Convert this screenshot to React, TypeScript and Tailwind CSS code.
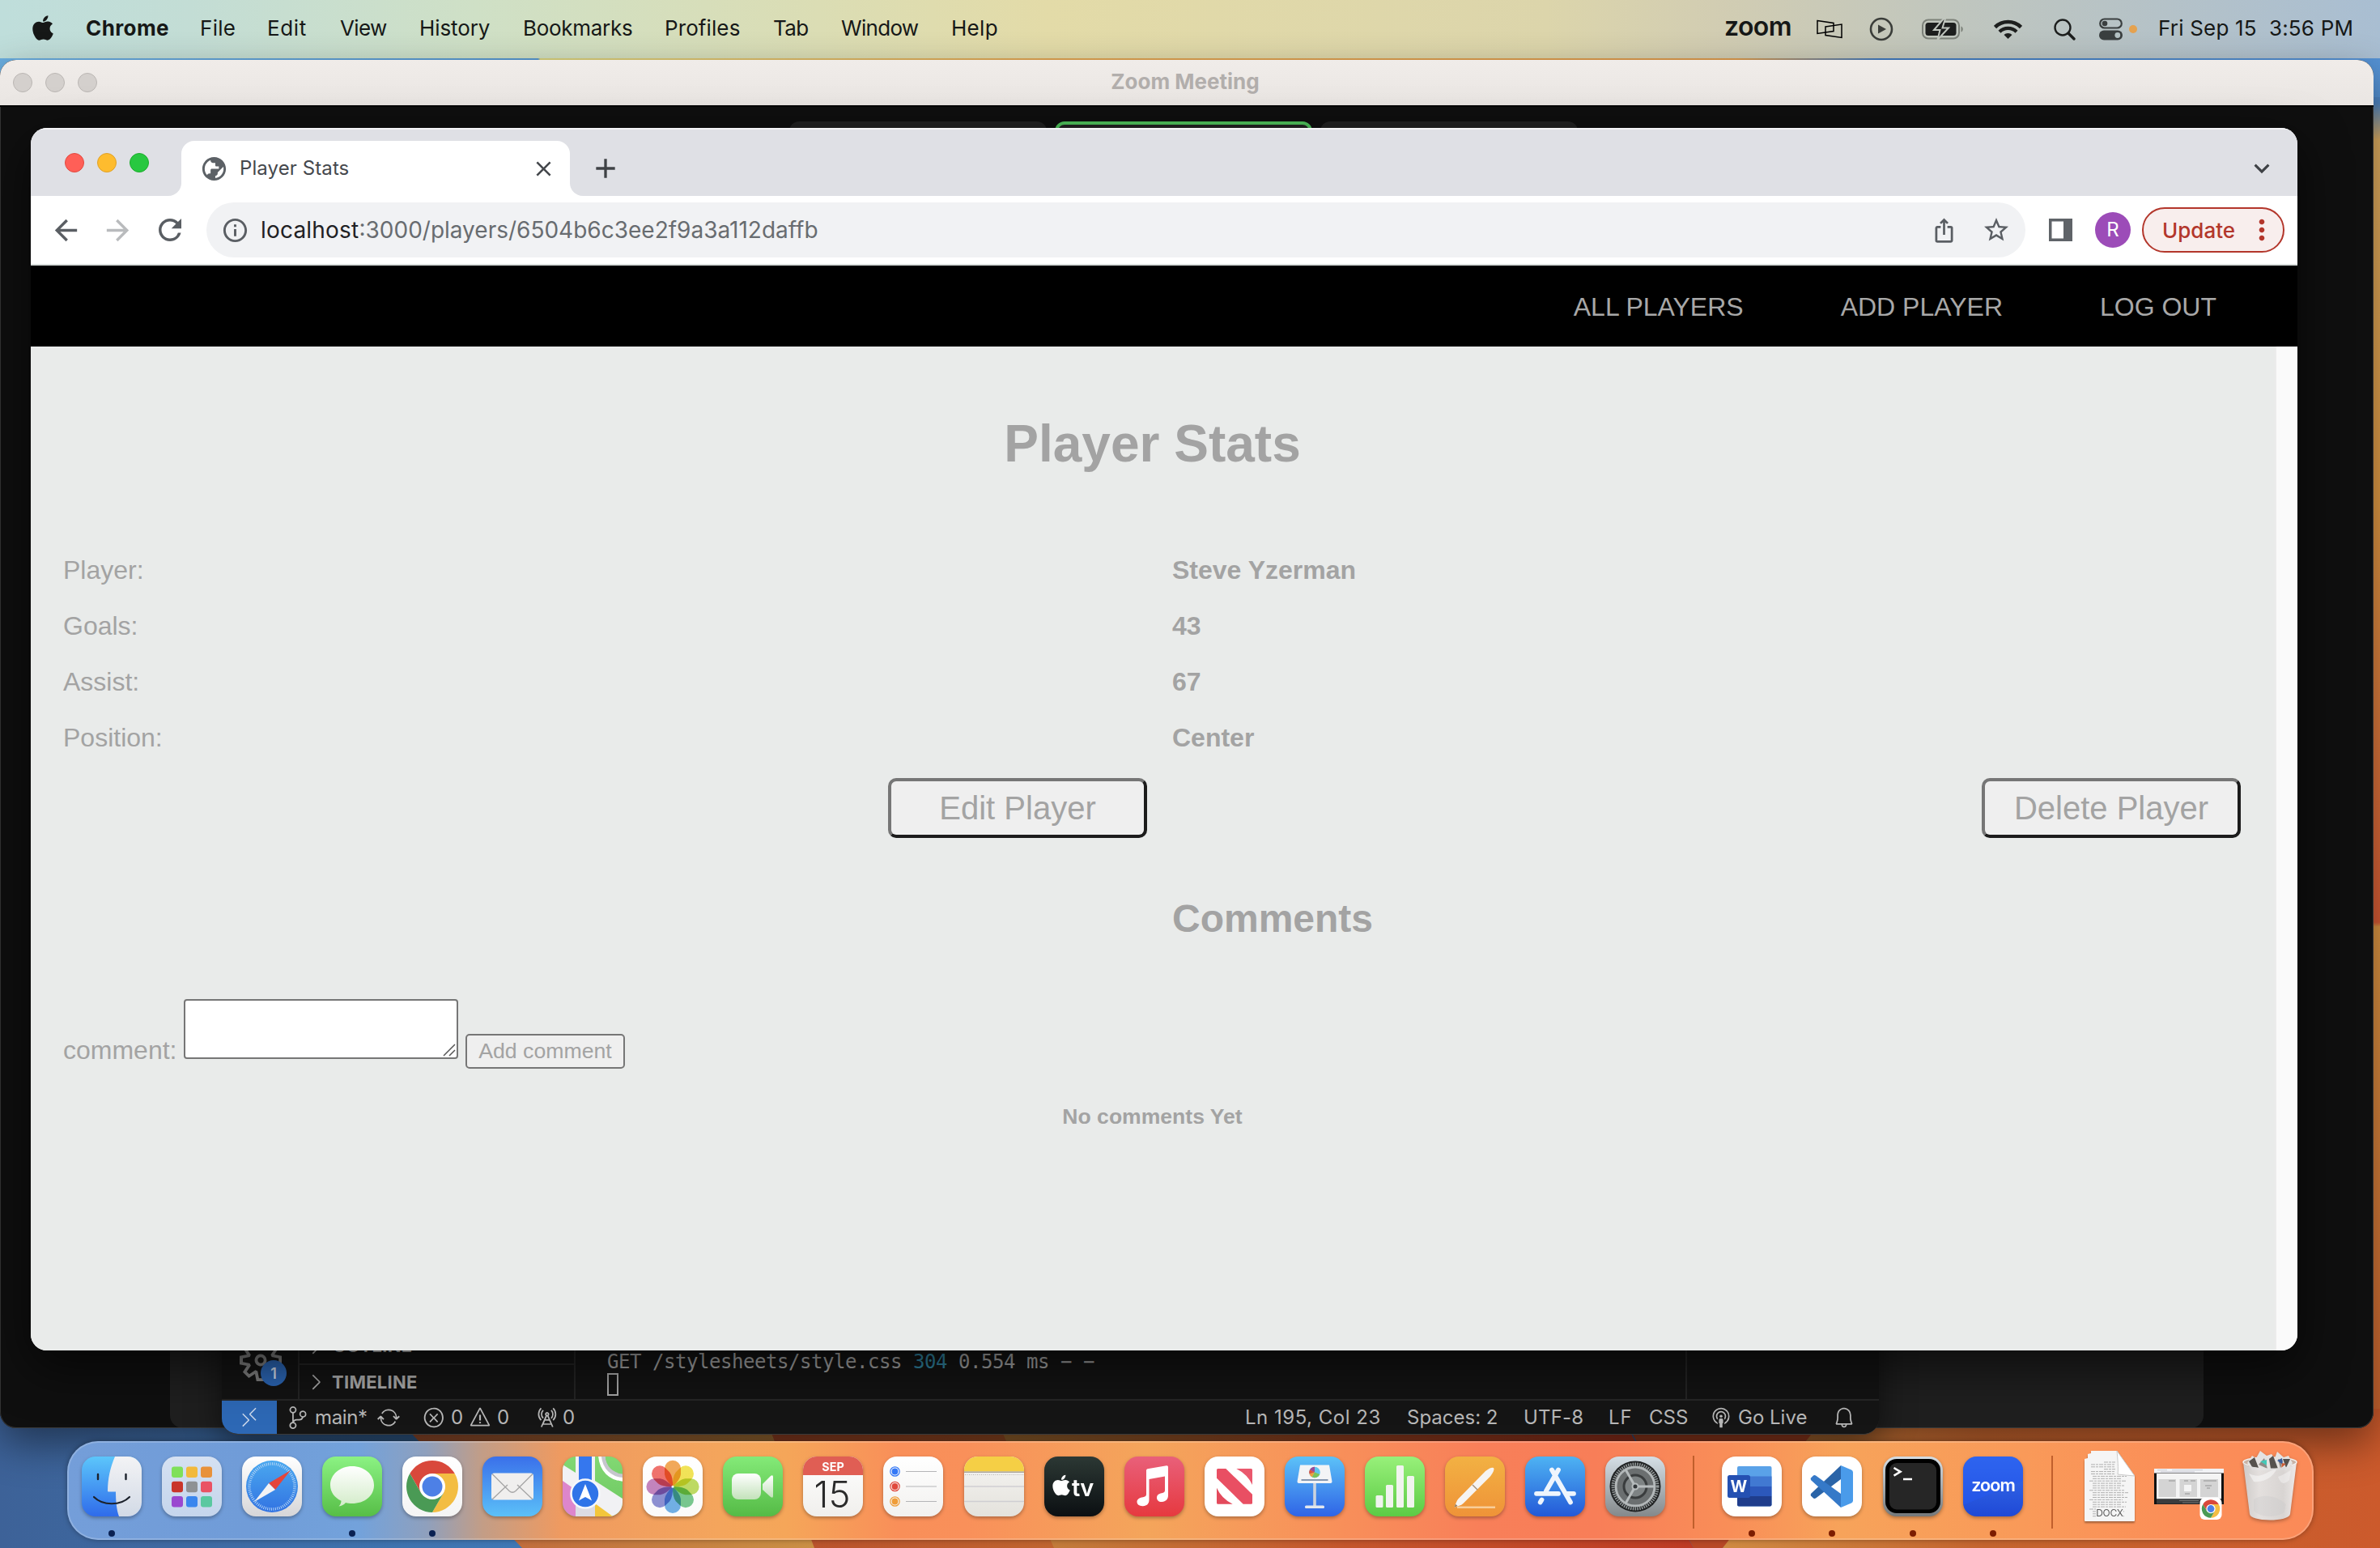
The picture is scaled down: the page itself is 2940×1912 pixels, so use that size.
import React from "react";
import { FaApple } from "react-icons/fa";
import {
  MdPublic,
  MdClose,
  MdAdd,
  MdExpandMore,
  MdArrowBack,
  MdArrowForward,
  MdRefresh,
  MdInfoOutline,
  MdIosShare,
  MdStarBorder,
  MdMoreVert,
} from "react-icons/md";
import {
  VscSettingsGear,
  VscChevronRight,
  VscRemote,
  VscSourceControl,
  VscSync,
  VscError,
  VscWarning,
  VscRadioTower,
  VscBroadcast,
  VscBell,
} from "react-icons/vsc";

/* ---------- Desktop ---------- */

function Wallpaper() {
  return (
    <svg className="absolute inset-0" width="2940" height="1912" viewBox="0 0 2940 1912">
      <defs>
        <linearGradient id="wTop" x1="0" x2="2940" y1="0" y2="0" gradientUnits="userSpaceOnUse">
          <stop offset="0" stopColor="#6aaee0" />
          <stop offset="0.226" stopColor="#5596cf" />
          <stop offset="0.227" stopColor="#d9d27c" />
          <stop offset="0.44" stopColor="#e2a552" />
          <stop offset="0.73" stopColor="#dc9a4c" />
          <stop offset="0.79" stopColor="#3f78bd" />
          <stop offset="1" stopColor="#5592d4" />
        </linearGradient>
        <linearGradient id="wRight" x1="0" x2="0" y1="72" y2="1912" gradientUnits="userSpaceOnUse">
          <stop offset="0" stopColor="#5592d4" />
          <stop offset="0.03" stopColor="#4f86c4" />
          <stop offset="0.055" stopColor="#dfae62" />
          <stop offset="0.3" stopColor="#e09a45" />
          <stop offset="0.58" stopColor="#d85c36" />
          <stop offset="0.583" stopColor="#dc9644" />
          <stop offset="1" stopColor="#c9582b" />
        </linearGradient>
        <linearGradient id="wBlue" x1="0" x2="1" y1="0" y2="0">
          <stop offset="0" stopColor="#3d6298" />
          <stop offset="1" stopColor="#3f7ab8" />
        </linearGradient>
        <linearGradient id="wA" x1="0" x2="1" y1="0" y2="0">
          <stop offset="0" stopColor="#bd6039" />
          <stop offset="1" stopColor="#ca9044" />
        </linearGradient>
        <linearGradient id="wB" x1="0" x2="1" y1="0" y2="0">
          <stop offset="0" stopColor="#b9502c" />
          <stop offset="1" stopColor="#c0642f" />
        </linearGradient>
        <linearGradient id="wC" x1="0" x2="1" y1="0" y2="0">
          <stop offset="0" stopColor="#c2823c" />
          <stop offset="0.5" stopColor="#c4562c" />
          <stop offset="1" stopColor="#bd3a24" />
        </linearGradient>
        <linearGradient id="wD" x1="0" x2="1" y1="0" y2="0">
          <stop offset="0" stopColor="#cf8a42" />
          <stop offset="0.4" stopColor="#c4642e" />
          <stop offset="1" stopColor="#cc5a2c" />
        </linearGradient>
      </defs>
      <rect width="2940" height="400" fill="url(#wTop)" />
      <rect x="2800" y="120" width="140" height="1700" fill="url(#wRight)" />
      <rect y="1600" width="700" height="312" fill="url(#wBlue)" />
      <path d="M500 1762H960L1010 1912H645Z" fill="url(#wA)" />
      <path d="M950 1762H1245L1305 1912H1006Z" fill="url(#wB)" />
      <path d="M1235 1762H2010L2092 1912H1302Z" fill="url(#wC)" />
      <path d="M2008 1755H2280L2128 1912H2092Z" fill="#b84826" />
      <path d="M2262 1740H2940V1912H2128Z" fill="url(#wD)" />
    </svg>
  );
}

const menus = [
  { label: "File", cls: "w-[83px] tracking-[0.3px]" },
  { label: "Edit", cls: "w-[90px] tracking-[0.6px]" },
  { label: "View", cls: "w-[98px] tracking-[-0.6px]" },
  { label: "History", cls: "w-[128px] tracking-[-0.1px]" },
  { label: "Bookmarks", cls: "w-[175px] tracking-[-0.3px]" },
  { label: "Profiles", cls: "w-[134px] tracking-[0.1px]" },
  { label: "Tab", cls: "w-[84px] tracking-[-0.6px]" },
  { label: "Window", cls: "w-[136px] tracking-[-0.7px]" },
  { label: "Help", cls: "w-[80px] tracking-[0.3px]" },
];

function MenuBar() {
  return (
    <div className="relative flex h-[72px] items-center bg-[linear-gradient(90deg,#bfdedb_0%,#c3ddd5_8%,#cfe0c6_20%,#e3dba8_44%,#dcd5ab_65%,#d2cdb2_72%,#c0c6be_82%,#a9bed2_100%)] text-[26px] font-normal text-[#161817]">
      <div className="flex h-full w-[106px] items-center pb-[4px] pl-[40px]">
        <FaApple className="h-[35px] w-[26px]" />
      </div>
      <div className="flex h-full items-center pb-[3px] whitespace-nowrap">
        <div className="w-[141px] font-bold tracking-[0.4px]">Chrome</div>
        {menus.map((m) => (
          <div key={m.label} className={m.cls}>
            {m.label}
          </div>
        ))}
      </div>
      <div className="ml-auto flex h-full items-center whitespace-nowrap">
        <div className="w-[114px] pb-[6px] text-[32px] font-semibold tracking-[-0.6px]">zoom</div>
        <svg className="mr-[33px]" width="32" height="24" viewBox="0 0 32 24" fill="none" stroke="#000" strokeWidth="1.5">
          <path d="M1 1.5L21 4.500V14.500L1 17.500Z" />
          <path d="M11 9L31 6V22.500L11 19.500Z" />
        </svg>
        <svg className="mr-[35px]" width="30" height="30" viewBox="0 0 30 30" fill="none">
          <circle cx="15" cy="15" r="13" stroke="#3b3e3a" strokeWidth="2.600" />
          <path d="M11 9.500L21 15L11 20.500Z" fill="#3b3e3a" />
        </svg>
        <svg className="mr-[37px]" width="52" height="26" viewBox="0 0 52 26" fill="none">
          <rect x="1" y="1.500" width="45" height="23" rx="7" stroke="#7c8179" strokeWidth="2" />
          <path d="M48.500 9.500C51.500 10.500 51.500 15.500 48.500 16.500Z" fill="#7c8179" />
          <rect x="4.500" y="5" width="38" height="16" rx="3.500" fill="#1d1f1e" />
          <path d="M27 0L15 14H22.500L19.500 26L33 11.500H25.500L29 0Z" fill="#1d1f1e" stroke="#c0c6be" strokeWidth="2" />
        </svg>
        <svg className="mr-[39px]" width="35" height="26" viewBox="0 0 35 26" fill="none" stroke="#1d1f1e">
          <path d="M1.500 10.500A23 23 0 0 1 33.500 10.500" strokeWidth="4.600" />
          <path d="M7 16.200A15 15 0 0 1 28 16.200" strokeWidth="4.400" />
          <path d="M17.500 25L12.500 20C15 17.300 20 17.300 22.500 20Z" fill="#1d1f1e" stroke="none" />
        </svg>
        <svg className="mr-[29px]" width="27" height="27" viewBox="0 0 27 27" fill="none" stroke="#1d1f1e" strokeLinecap="round">
          <circle cx="11" cy="11" r="9.500" strokeWidth="2.400" />
          <path d="M18 18L25 25" strokeWidth="3.400" />
        </svg>
        <svg className="mr-[8px]" width="29" height="28" viewBox="0 0 29 28" fill="none">
          <rect x="1.200" y="1.500" width="26.600" height="11" rx="5.500" stroke="#3a3f40" strokeWidth="2.200" />
          <circle cx="7" cy="7" r="3.300" fill="#3a3f40" />
          <rect x="0" y="15.500" width="29" height="12" rx="6" fill="#3a3f40" />
          <circle cx="22.800" cy="21.500" r="3.400" fill="#b4c2c4" />
        </svg>
        <div className="mr-[26px] size-[10px] rounded-full bg-[#e5a24f]" />
        <div className="w-[274px] pb-[3px] tracking-[0.2px] whitespace-pre">Fri Sep 15{"  "}3:56 PM</div>
      </div>
    </div>
  );
}

function ZoomWindow() {
  return (
    <div className="absolute top-[74px] left-0 h-[1690px] w-[2932px] overflow-hidden rounded-[20px] bg-[#0f0f0f] shadow-[0_20px_50px_rgba(0,0,0,0.45),inset_0_0_0_1px_#333]">
      <div className="relative flex h-[58px] items-center border-b-2 border-black bg-gradient-to-b from-[#f0ece9] to-[#eae6e3] pl-[16px]">
        <div className="flex gap-[16px]">
          {[0, 1, 2].map((i) => (
            <div key={i} className="size-[24px] rounded-full border border-[#bab6b3] bg-[#d4d0cd]" />
          ))}
        </div>
        <div className="absolute inset-x-0 pr-[4px] pb-[3px] text-center text-[26px] font-bold text-[#b2aeac]">
          Zoom Meeting
        </div>
      </div>
      <div className="flex gap-[10px] pt-[18px] pl-[975px]">
        <div className="h-[120px] w-[318px] rounded-[12px] bg-[#222]" />
        <div className="h-[120px] w-[318px] rounded-[12px] border-[4px] border-[#4fc35c] bg-[#222]" />
        <div className="h-[120px] w-[318px] rounded-[12px] bg-[#222]" />
      </div>
      <div className="absolute bottom-0 left-[210px] h-[300px] w-[2512px] rounded-b-[16px] bg-[#1f1f1f]" />
      <div className="absolute inset-x-0 bottom-0 h-[1px] bg-[#3a3a3a]" />
    </div>
  );
}

/* ---------- Editor window ---------- */

function EditorWindow() {
  return (
    <div className="absolute top-[1600px] left-[274px] flex h-[172px] w-[2047px] flex-col overflow-hidden rounded-b-[20px] border-b border-[#3a3a3a] bg-[#131313] shadow-[0_10px_40px_rgba(0,0,0,0.5)]">
      <div className="flex h-[128px]">
        <div className="relative w-[96px] border-r-2 border-[#242424]">
          <VscSettingsGear className="absolute top-[54px] left-[22px] size-[52px] text-[#7d7d7d]" />
          <div className="absolute top-[80px] left-[48px] flex size-[32px] items-center justify-center rounded-full bg-[#2b65b3] text-[18px] font-semibold text-[#d4dcea]">
            1
          </div>
        </div>
        <div className="w-[341px] border-r-2 border-[#242424] pt-[41px] text-[22px] font-bold text-[#a9a9a9]">
          <div className="flex h-[45px] items-center border-b-2 border-[#242424] pl-[5px]">
            <VscChevronRight className="mr-[6px] size-[30px]" />
            <span className="tracking-[0.27px]">OUTLINE</span>
          </div>
          <div className="flex h-[42px] items-center pl-[5px]">
            <VscChevronRight className="mr-[5px] size-[30px]" />
            <span className="tracking-[0.27px]">TIMELINE</span>
          </div>
        </div>
        <div className="flex-1 pt-[66px] pl-[39px] font-['DejaVu_Sans_Mono',monospace] text-[24px] leading-[32px] tracking-[-0.45px] text-[#a3a3a3]">
          <div className="h-[30px] whitespace-pre">
            GET /stylesheets/style.css <span className="text-[#3185a2]">304</span> 0.554 ms − −
          </div>
          <div className="h-[28px] w-[14px] border-2 border-[#a8a8a8]" />
        </div>
        <div className="w-[239px] border-l-2 border-[#242424]" />
      </div>
      <div className="flex h-[44px] items-center border-t-2 border-[#262626] bg-[#151515] text-[24px] whitespace-nowrap text-[#b7b7b7]">
        <div className="flex h-full w-[68px] items-center justify-center bg-[#2d68b5] text-[#c9d6ea]">
          <VscRemote className="size-[28px]" />
        </div>
        <VscSourceControl className="ml-[12px] size-[28px]" />
        <span className="ml-[7px] w-[66px] tracking-[-0.37px]">main*</span>
        <VscSync className="ml-[11px] size-[28px]" />
        <VscError className="ml-[28px] size-[28px]" />
        <span className="ml-[7px] w-[16px]">0</span>
        <VscWarning className="ml-[6px] size-[28px]" />
        <span className="ml-[7px] w-[16px]">0</span>
        <VscRadioTower className="ml-[31px] size-[28px]" />
        <span className="ml-[6px]">0</span>
        <div className="mr-[29px] ml-auto flex items-center">
          <span className="w-[200px] tracking-[0.5px]">Ln 195, Col 23</span>
          <span className="w-[144px] tracking-[0px]">Spaces: 2</span>
          <span className="w-[105px] tracking-[0.2px]">UTF-8</span>
          <span className="w-[50px] tracking-[1px]">LF</span>
          <span className="w-[75px]">CSS</span>
          <VscBroadcast className="mr-[7px] size-[28px]" />
          <span className="w-[117px]">Go Live</span>
          <VscBell className="size-[28px]" />
        </div>
      </div>
    </div>
  );
}

/* ---------- Browser window ---------- */

function TabStrip() {
  return (
    <div className="flex h-[84px] items-end bg-[#dfe0e5] shadow-[inset_0_2px_0_#f3f3f6]">
      <div className="flex h-full w-[170px] items-center gap-[16px] pt-[2px] pl-[42px]">
        <div className="size-[24px] rounded-full border border-[#e2493f] bg-[#ff5f57]" />
        <div className="size-[24px] rounded-full border border-[#e0a127] bg-[#febc2e]" />
        <div className="size-[24px] rounded-full border border-[#1dad2c] bg-[#28c840]" />
      </div>
      <div className="size-[16px] bg-white">
        <div className="size-full rounded-br-[16px] bg-[#dfe0e5]" />
      </div>
      <div className="flex h-[68px] w-[480px] items-center rounded-t-[16px] bg-white pr-[17px] pl-[23px] text-[#45484d]">
        <MdPublic className="size-[35px] -scale-x-100 text-[#5c6166]" />
        <span className="ml-[14px] text-[24px] tracking-[0.1px]">Player Stats</span>
        <MdClose className="ml-auto size-[31px]" />
      </div>
      <div className="size-[16px] bg-white">
        <div className="size-full rounded-bl-[16px] bg-[#dfe0e5]" />
      </div>
      <div className="flex h-[68px] flex-1 items-center justify-between pr-[25px] pl-[8px] text-[#3f4246]">
        <MdAdd className="size-[40px]" />
        <MdExpandMore className="size-[38px]" />
      </div>
    </div>
  );
}

function Toolbar() {
  return (
    <div className="flex h-[86px] items-center border-b-2 border-[#dadfdd] bg-white pl-[23px] text-[#5a5e63]">
      <MdArrowBack className="size-[41px]" />
      <MdArrowForward className="ml-[23px] size-[41px] text-[#b9bbbd]" />
      <MdRefresh className="ml-[23px] size-[42px]" />
      <div className="ml-[24px] flex h-[68px] w-[2247px] items-center rounded-full bg-[#f1f2f4] pr-[18px] pl-[18px]">
        <MdInfoOutline className="size-[35px]" />
        <span className="ml-[14px] text-[28px] text-[#686c70]">
          <span className="tracking-[0.2px] text-[#1f2124]">localhost</span>:3000/players/6504b6c3ee2f9a3a112daffb
        </span>
        <MdIosShare className="ml-auto size-[33px]" />
        <MdStarBorder className="ml-[30px] size-[36px]" />
      </div>
      <svg className="ml-[29px]" width="29" height="28" viewBox="0 0 29 28">
        <rect width="29" height="28" fill="#5f6368" />
        <rect x="3.500" y="3.500" width="14.500" height="21" fill="#fff" />
      </svg>
      <div className="ml-[28px] flex size-[44px] items-center justify-center rounded-full bg-[#9c4cb8] text-[24px] text-white">R</div>
      <div className="ml-[14px] flex h-[56px] w-[176px] items-center rounded-full border-2 border-[#b3362b] bg-[#f8eeed] pl-[23px] text-[26px] font-medium text-[#b3362b]">
        Update
        <MdMoreVert className="ml-[13px] size-[40px]" />
      </div>
    </div>
  );
}

const stats = [
  ["Player:", "Steve Yzerman"],
  ["Goals:", "43"],
  ["Assist:", "67"],
  ["Position:", "Center"],
];

function StatsPage() {
  return (
    <div className="font-['Liberation_Sans',Arial,sans-serif] text-[#a3a3a3]">
      <nav className="flex h-[100px] items-center justify-end gap-[120px] bg-black pt-[2px] pr-[100px] text-[32px] text-[#a8a8a8]">
        <a>ALL PLAYERS</a>
        <a>ADD PLAYER</a>
        <a>LOG OUT</a>
      </nav>
      <div className="flex h-[1240px]">
        <main className="w-[2772px] bg-[#e9ebea] pt-[84px] pl-[40px]">
          <h1 className="-ml-[41px] text-center text-[64px] leading-[72px] font-bold">Player Stats</h1>
          <div className="mt-[86px] text-[32px] leading-[69px]">
            {stats.map(([k, v]) => (
              <div key={k} className="flex">
                <div className="w-[1370px]">{k}</div>
                <div className="font-bold">{v}</div>
              </div>
            ))}
          </div>
          <div className="mt-[15px] flex justify-between pr-[42px] pl-[1019px] text-[40px]">
            <button className="h-[74px] w-[320px] rounded-[10px] border-[4px] border-t-[#767676] border-r-[#1c1c1c] border-b-[#1c1c1c] border-l-[#767676] bg-[#efefef]">
              Edit Player
            </button>
            <button className="h-[74px] w-[320px] rounded-[10px] border-[4px] border-t-[#767676] border-r-[#1c1c1c] border-b-[#1c1c1c] border-l-[#767676] bg-[#efefef]">
              Delete Player
            </button>
          </div>
          <h2 className="mt-[72px] ml-[1370px] text-[48px] leading-[56px] font-bold">Comments</h2>
          <div className="mt-[71px] flex items-start text-[32px]">
            <label className="mt-[45px] w-[149px] leading-[36px]">comment:</label>
            <div className="flex h-[74px] w-[339px] items-end justify-end rounded-[4px] border-2 border-[#767676] bg-white p-[1px]">
              <svg width="16" height="16" viewBox="0 0 16 16" stroke="#555" strokeWidth="1.500">
                <path d="M1 15L15 1M8 15L15 8" />
              </svg>
            </div>
            <button className="mt-[43px] ml-[9px] h-[43px] w-[197px] rounded-[5px] border-2 border-[#767676] bg-[#efefef] text-[26.67px] leading-none">
              Add comment
            </button>
          </div>
          <p className="mt-[43px] -ml-[41px] text-center text-[26.56px] leading-[32px] font-bold">No comments Yet</p>
        </main>
        <div className="w-[28px] border-l-2 border-[#ececec] bg-[#fafafa]" />
      </div>
    </div>
  );
}

function BrowserWindow() {
  return (
    <div className="absolute top-[158px] left-[38px] h-[1510px] w-[2800px] overflow-hidden rounded-[20px] bg-white shadow-[0_20px_60px_rgba(0,0,0,0.6)]">
      <TabStrip />
      <Toolbar />
      <StatsPage />
    </div>
  );
}

/* ---------- Dock ---------- */

function Grad({ id, a, b }: { id: string; a: string; b: string }) {
  return (
    <linearGradient id={id} x1="0" x2="0" y1="0" y2="1">
      <stop offset="0" stopColor={a} />
      <stop offset="1" stopColor={b} />
    </linearGradient>
  );
}

function Tile({ id, a, b, children }: { id: string; a: string; b: string; children?: React.ReactNode }) {
  return (
    <svg width="74" height="74" viewBox="0 0 74 74" className="drop-shadow-[0_2px_2px_rgba(0,0,0,0.3)]">
      <defs>
        <Grad id={`g-${id}`} a={a} b={b} />
        <clipPath id={`c-${id}`}>
          <rect width="74" height="74" rx="17" />
        </clipPath>
      </defs>
      <g clipPath={`url(#c-${id})`}>
        <rect width="74" height="74" fill={`url(#g-${id})`} />
        {children}
      </g>
    </svg>
  );
}

function ChromeDisc() {
  return (
    <>
      <path d="M64.700 21L37 21L23.100 45L9.300 21A32 32 0 0 1 64.700 21Z" fill="#d9483b" />
      <path d="M64.700 21H37L50.900 45L37 69A32 32 0 0 0 64.700 21Z" fill="#f3bd42" />
      <path d="M9.300 21L23.100 45H50.900L37 69A32 32 0 0 1 9.300 21Z" fill="#4a9a55" />
      <circle cx="37" cy="37" r="16" fill="#fff" />
      <circle cx="37" cy="37" r="12.500" fill="#4d80e6" />
    </>
  );
}

const Finder = () => (
  <Tile id="finder" a="#5cc6fb" b="#2f6bea">
    <defs>
      <Grad id="finderFace" a="#f3f3f5" b="#d2dae6" />
    </defs>
    <path d="M41 0C35 14 32 28 32 42.500Q32 43.500 33 43.500H42C42 55 43 66 46 74H74V0Z" fill="url(#finderFace)" />
    <path d="M15 50C26 61 48 61 59 50" fill="none" stroke="#1c222c" strokeWidth="2.200" strokeLinecap="round" />
    <path d="M20 22V28M54.500 22V28" stroke="#1c222c" strokeWidth="2.400" strokeLinecap="round" />
  </Tile>
);

const padColors = ["#7fe05a", "#f2b93c", "#e8913a", "#c9352b", "#8e9194", "#ea5264", "#9a48d0", "#3a86ee", "#5ac8a0"];
const Launchpad = () => (
  <Tile id="pad" a="#d5e1f2" b="#c5d5ec">
    {padColors.map((c, i) => (
      <rect key={c} x={12 + (i % 3) * 18} y={12.5 + Math.floor(i / 3) * 18.2} width="14" height="13.500" rx="3" fill={c} />
    ))}
  </Tile>
);

const Safari = () => (
  <Tile id="safari" a="#ffffff" b="#d6d6d8">
    <defs>
      <Grad id="safariSea" a="#4aa8ef" b="#3273e2" />
    </defs>
    <circle cx="37" cy="37" r="32" fill="url(#safariSea)" />
    <circle cx="37" cy="37" r="28" fill="none" stroke="#b9d9f6" strokeWidth="3.600" strokeDasharray="0.900 1.540" />
    <path d="M60 17L33 33L41 41Z" fill="#e4453a" />
    <path d="M15 56L33 33L41 41Z" fill="#f2f2f4" />
  </Tile>
);

const Messages = () => (
  <Tile id="msg" a="#8bf283" b="#57be47">
    <defs>
      <Grad id="msgBubble" a="#ffffff" b="#d3ecc9" />
    </defs>
    <path d="M37 12C52 12 64 22 64 35.500S52 58 37 58C34 58 31.500 57.700 29 57C27 59.500 24 61.300 20.500 61.500C22.500 59.500 23.500 57 23.500 54.700C15.500 51 10 44 10 35.500C10 22 22 12 37 12Z" fill="url(#msgBubble)" />
  </Tile>
);

const ChromeApp = () => (
  <Tile id="chrome" a="#ffffff" b="#f4f4f4">
    <ChromeDisc />
  </Tile>
);

const Mail = () => (
  <Tile id="mail" a="#3a70ea" b="#5bc0f8">
    <rect x="11" y="20.500" width="52" height="33" rx="3.500" fill="#f0efee" />
    <path d="M12 53L31 35M62 53L43 35M12 21.500L33 42.500Q37 46 41 42.500L62 21.500" fill="none" stroke="#a5a5a5" strokeWidth="1.300" />
  </Tile>
);

const Maps = () => (
  <Tile id="maps" a="#82d873" b="#6cc760">
    <path d="M0 10L16 20V0H40V30L74 52V74H58L0 34Z" fill="#f1f1f4" />
    <path d="M0 30L20 44V74H0Z" fill="#dd86cc" />
    <path d="M16 50H40V74H16Z" fill="#dcdce4" />
    <path d="M40 58L62 74H40Z" fill="#f3c63c" />
    <rect x="20" y="0" width="16" height="40" fill="#3577ee" />
    <path d="M48 -2C49 16 60 26 76 27" fill="none" stroke="#fff" strokeWidth="8" />
    <path d="M50 -2C51 14 61 23 76 24" fill="none" stroke="#c6c6cd" strokeWidth="4.500" />
    <circle cx="28" cy="46" r="17.500" fill="#2f74e8" stroke="#f5f7fb" strokeWidth="2.600" />
    <path d="M28 34L36 54.500Q32 52 28 50Q24 52 20 54.500Z" fill="#fff" />
  </Tile>
);

const petals = ["#f09a3c", "#f0e03a", "#b4d648", "#62c07c", "#5aa5e4", "#7b7fce", "#bb70b4", "#ee5a54"];
const Photos = () => (
  <Tile id="photos" a="#ffffff" b="#fafafa">
    {petals.map((c, i) => (
      <path key={c} d="M27 14.700A10 10 0 0 1 47 14.700V22Q46 29 37 37.300Q28 29 27 22Z" fill={c} opacity="0.85" transform={`rotate(${i * 45} 37 37.300)`} className="mix-blend-multiply" />
    ))}
    <circle cx="37" cy="37.300" r="1.500" fill="#eef3f3" />
  </Tile>
);

const FaceTime = () => (
  <Tile id="ft" a="#84ea78" b="#55bb46">
    <defs>
      <Grad id="ftCam" a="#ffffff" b="#c3e2ba" />
    </defs>
    <rect x="11" y="21" width="36" height="32" rx="8" fill="url(#ftCam)" />
    <path d="M49 34L59 24Q62 22 62 25.500V48.500Q62 52 59 50L49 41Z" fill="url(#ftCam)" />
  </Tile>
);

const Calendar = () => (
  <Tile id="cal" a="#ffffff" b="#f0efec">
    <rect width="74" height="23" fill="#e05e54" />
    <text x="37" y="17.600" textAnchor="middle" fontFamily="Inter" fontWeight="700" fontSize="14.300" fill="#fff">SEP</text>
    <text x="36" y="63" textAnchor="middle" fontFamily="Inter" fontWeight="300" fontSize="45.500" fill="#2a2a2a">15</text>
  </Tile>
);

const Reminders = () => (
  <Tile id="rem" a="#ffffff" b="#f2f1ef">
    {["#3478f6", "#e0483c", "#ef9d38"].map((c, i) => (
      <g key={c}>
        <circle cx="14.500" cy={18.5 + i * 18.5} r="3.900" fill={c} />
        <circle cx="14.500" cy={18.5 + i * 18.5} r="5.700" fill="none" stroke={c} strokeWidth="1.200" />
        <path d={`M28 ${18.5 + i * 18.5}H66`} stroke="#b5b5b8" strokeWidth="1.200" />
      </g>
    ))}
  </Tile>
);

const Notes = () => (
  <Tile id="notes" a="#f6f5f3" b="#e4e2dc">
    <rect width="74" height="18.500" fill="#f5cf45" />
    <rect y="18.500" width="74" height="1.500" fill="#a9a49a" />
    <path d="M1 22.500H74" stroke="#b9b6b0" strokeWidth="1" strokeDasharray="1 1.500" />
    <path d="M0 37H74M0 55.500H74" stroke="#cfced2" strokeWidth="1.300" />
  </Tile>
);

const TV = () => (
  <Tile id="tv" a="#2c3834" b="#0b0f12">
    <FaApple x="6.500" y="21" size={29} color="#fff" />
    <text x="34" y="48.500" fontFamily="Inter" fontWeight="600" fontSize="29" letterSpacing="-0.500" fill="#fff">tv</text>
  </Tile>
);

const Music = () => (
  <Tile id="music" a="#e9607a" b="#e6393f">
    <path d="M27 17Q27 15.600 28.500 15.200L52 11.200Q54 11 54 12.800V48C54 53 51 55.500 46.500 56C42.500 56.300 40 54 40 51C40 47.500 42.500 46 46 45.300C49 44.700 50 44 50 41.500V24.500L30.500 28V53.500C30.500 58.500 27.500 61 23 61.200C18.500 61.500 15.500 59 15.500 56C15.500 53 18 51.300 21.500 50.500C25.500 49.700 27 49 27 46.500Z" fill="#fff" />
  </Tile>
);

const News = () => (
  <Tile id="news" a="#ffffff" b="#ffffff">
    <path d="M16.500 15H26.300L59 46.700V57.200Q59 58.700 57.500 58.700H47.700L15 26.700V16.500Q15 15 16.500 15Z" fill="#e94f63" />
    <path d="M39.300 15H57.500Q59 15 59 16.500V35Q53 22 39.300 15Z" fill="#ea586d" />
    <path d="M15 38.700Q21 52 34.700 58.700H16.500Q15 58.700 15 57.200Z" fill="#e34a5c" />
  </Tile>
);

const Keynote = () => (
  <Tile id="key" a="#5cc2f8" b="#2f64e6">
    <path d="M19 10.500H55L58.500 31Q58.500 33 56.500 33H17.500Q15.500 33 15.500 31Z" fill="#f3f4f6" />
    <rect x="20.500" y="28" width="33" height="2" fill="#8497b0" />
    <circle cx="37" cy="19.500" r="6.800" fill="#5fc4ee" />
    <path d="M37 19.500V12.700A6.800 6.800 0 0 0 31 16.200Z" fill="#9a4a9a" />
    <path d="M37 19.500L31 16.200A6.800 6.800 0 0 0 30.500 21.500Z" fill="#e0503c" />
    <path d="M37 19.500L30.500 21.500A6.800 6.800 0 0 0 34 25.500Z" fill="#eea03c" />
    <path d="M37 19.500L34 25.500A6.800 6.800 0 0 0 43.300 22Z" fill="#7cc358" />
    <rect x="35.200" y="33" width="3.600" height="28" fill="#ccd3dd" />
    <rect x="25" y="60.500" width="24" height="3.500" rx="1.500" fill="#e2e7ee" />
  </Tile>
);

const Numbers = () => (
  <Tile id="num" a="#98f07a" b="#5ccb45">
    {[
      [13.5, 48],
      [26, 35],
      [39, 11],
      [52, 24],
    ].map(([x, y]) => (
      <rect key={x} x={x} y={y} width="9" height={63 - y} rx="1.500" fill="#f0f4ee" />
    ))}
  </Tile>
);

const Pages = () => (
  <Tile id="pages" a="#f2b143" b="#ef9338">
    <path d="M15 62.700H62" stroke="#f8cd98" strokeWidth="2.600" />
    <path d="M11.500 62.800L14 56.500Q14.500 54.500 16.500 52.300L50 18Q57 12.500 60 14Q62 16.500 56 24.500L22.500 58Q20.500 60 17.500 60.700Z" fill="#f6f4f2" />
    <path d="M34 35L40 41" stroke="#a38f78" strokeWidth="1.400" />
    <path d="M11.500 62.800L13 58.800L15.500 61Z" fill="#8e7a60" />
  </Tile>
);

const AppStore = () => (
  <Tile id="store" a="#4eb3f3" b="#2359d8">
    <g stroke="#eef5fd" strokeWidth="5.800" strokeLinecap="round">
      <path d="M33 16.500L56 56.500M41 16.500L26 42.500M14 45.800H41M51 45.800H60M20.500 53.500L18.700 56.500" />
    </g>
  </Tile>
);

const Settings = () => (
  <Tile id="set" a="#d5dfe6" b="#84898b">
    <circle cx="37" cy="37" r="31.500" fill="#1f2122" />
    <circle cx="37" cy="37" r="27.500" fill="none" stroke="#8f9596" strokeWidth="4" strokeDasharray="1.600 1.200" />
    <circle cx="37" cy="37" r="24" fill="#6b6f70" stroke="#b2b7b8" strokeWidth="3" />
    <circle cx="37" cy="37" r="14" fill="#7e8384" stroke="#3a3d3e" strokeWidth="3" />
    <path d="M37 37H61M37 37L25 16M37 37L25 58" stroke="#b7bcbd" strokeWidth="3" />
    <circle cx="37" cy="37" r="3.500" fill="#33373a" stroke="#b7bcbd" strokeWidth="2" />
  </Tile>
);

const Word = () => (
  <Tile id="word" a="#ffffff" b="#ffffff">
    <rect x="19" y="12" width="42.500" height="49.500" rx="2" fill="#5aa2e8" />
    <rect x="19" y="24.500" width="42.500" height="12.500" fill="#4179d2" />
    <rect x="19" y="37" width="42.500" height="12" fill="#2c58bb" />
    <path d="M19 49H61.500V59.500Q61.500 61.500 59.500 61.500H21Q19 61.500 19 59.500Z" fill="#1f3d8c" />
    <rect x="7" y="23" width="28" height="28" rx="2.500" fill="#2450b2" />
    <text x="21" y="44" textAnchor="middle" fontFamily="Inter" fontWeight="700" fontSize="20" fill="#fff">W</text>
  </Tile>
);

const VSCode = () => (
  <Tile id="vsc" a="#ffffff" b="#ffffff">
    <path d="M48 11V28L17 51.500Q15 52.500 13.500 51L11 48.500Q10 47 11.500 45.500Z" fill="#2a64a8" />
    <path d="M48 63V46L17 23.500Q15 22.500 13.500 24L11 26.500Q10 28 11.500 29.500Z" fill="#3579c8" />
    <path d="M48 11L61 16.500Q63 17.500 63 19.500V54.500Q63 56.500 61 57.500L48 63Z" fill="#4a9bea" />
  </Tile>
);

const Terminal = () => (
  <Tile id="term" a="#d5dde3" b="#74787a">
    <rect x="3" y="3" width="68" height="67" rx="14" fill="#000" />
    <rect x="8" y="8" width="58" height="57.500" rx="9" fill="#262626" />
    <path d="M13.500 14L21.500 18.800L13.500 23.600" fill="none" stroke="#fff" strokeWidth="2.600" />
    <path d="M25 28H36" stroke="#fff" strokeWidth="2.400" />
  </Tile>
);

const ZoomApp = () => (
  <Tile id="zoomapp" a="#3a72ee" b="#1f49d6">
    <path d="M0 0H74V30L0 60Z" fill="#2459f0" opacity="0.55" />
    <text x="37" y="43" textAnchor="middle" fontFamily="Inter" fontWeight="600" fontSize="21.500" letterSpacing="-0.900" fill="#fff">zoom</text>
  </Tile>
);

const apps: { name: string; Icon: () => React.ReactElement; open?: boolean }[] = [
  { name: "Finder", Icon: Finder, open: true },
  { name: "Launchpad", Icon: Launchpad },
  { name: "Safari", Icon: Safari },
  { name: "Messages", Icon: Messages, open: true },
  { name: "Chrome", Icon: ChromeApp, open: true },
  { name: "Mail", Icon: Mail },
  { name: "Maps", Icon: Maps },
  { name: "Photos", Icon: Photos },
  { name: "FaceTime", Icon: FaceTime },
  { name: "Calendar", Icon: Calendar },
  { name: "Reminders", Icon: Reminders },
  { name: "Notes", Icon: Notes },
  { name: "TV", Icon: TV },
  { name: "Music", Icon: Music },
  { name: "News", Icon: News },
  { name: "Keynote", Icon: Keynote },
  { name: "Numbers", Icon: Numbers },
  { name: "Pages", Icon: Pages },
  { name: "App Store", Icon: AppStore },
  { name: "Settings", Icon: Settings },
];

const recents = [
  { name: "Word", Icon: Word },
  { name: "VS Code", Icon: VSCode },
  { name: "Terminal", Icon: Terminal },
  { name: "Zoom", Icon: ZoomApp },
];

function DocxFile() {
  const rows = Array.from({ length: 24 }, (_, i) => 14 + i * 2.9);
  return (
    <svg width="62" height="88" viewBox="0 0 62 88" className="drop-shadow-[0_2px_1px_rgba(0,0,0,0.35)]">
      <path d="M0 10L4 9V4L8 3V0H40L62 31V86Q62 87 61 87H1Q0 87 0 86Z" fill="#f5f5f5" />
      {rows.map((y, i) => (
        <path
          key={y}
          d={i < 6 ? `M${i % 3 === 0 ? 24 : 8} ${y}H38` : `M${i % 4 === 0 ? 6 : 10} ${y}H${44 + ((i * 5) % 11)}`}
          stroke="#a8a8a8"
          strokeWidth="0.900"
          strokeDasharray="5 1 3 1"
        />
      ))}
      <path d="M40 0C41 10 42 22 41 29Q50 30 62 31Z" fill="#fff" stroke="#c9c9c9" strokeWidth="1" />
      <rect x="14" y="70" width="34" height="12" fill="#f5f5f5" />
      <text x="31" y="81" textAnchor="middle" fontFamily="Inter" fontSize="12" letterSpacing="-0.300" fill="#5d5d5d">DOCX</text>
    </svg>
  );
}

function MinimizedWindow() {
  return (
    <svg width="86" height="66" viewBox="0 0 86 66">
      <rect width="86" height="44" fill="#111" />
      <rect width="86" height="5.500" fill="#f1f2f5" />
      <path d="M4 1.800H16M22 1.800H60M8 3.900H50" stroke="#b7bcc6" strokeWidth="0.700" />
      <rect x="3" y="6" width="80" height="31.500" fill="#f4f4f4" />
      <path d="M5.500 13H27V35H5.500ZM31.500 13H53V35H31.500ZM57 13H79V35H57Z" fill="#d4d4d4" />
      <rect x="37" y="20" width="9" height="8" fill="#f4f4f4" />
      <path d="M18 15H26M37 15H42M45 15H51M61 15H77M63 21H71M65 24H69M38 31H44" stroke="#8a8a8a" strokeWidth="0.900" />
      <rect x="3" y="37.500" width="80" height="6" fill="#3a3c3e" />
      <path d="M31 39.500H55M35 42H55" stroke="#8a8a8a" strokeWidth="0.700" />
      <rect x="56.500" y="36" width="27" height="27" rx="6" fill="#fff" />
      <g transform="translate(57 36.500) scale(0.352)">
        <ChromeDisc />
      </g>
    </svg>
  );
}

function Trash() {
  return (
    <svg width="68" height="88" viewBox="0 0 68 88" className="drop-shadow-[0_2px_2px_rgba(0,0,0,0.3)]">
      <defs>
        <linearGradient id="bin" x1="0" x2="1" y1="0" y2="0">
          <stop offset="0" stopColor="#cfcfcf" />
          <stop offset="0.3" stopColor="#e6e5e5" />
          <stop offset="0.75" stopColor="#dad9d9" />
          <stop offset="1" stopColor="#f0efef" />
        </linearGradient>
      </defs>
      <path d="M1 14C1 6 67 6 67 14C67 22 1 22 1 14Z" fill="#c9b3a6" stroke="#f4f4f4" strokeWidth="1.500" />
      <path d="M6 15L12 6L17 9L22 0L30 6L36 4L40 9L43 1L51 8L57 6L62 15L55 24H12Z" fill="#e4e3e2" />
      <path d="M8 13L15 8L20 21L12 20ZM33 10L38 6L44 22H35ZM50 10L59 10L54 21Z" fill="#55524f" />
      <path d="M20 17L27 9L31 22ZM44 10L50 12L47 22Z" fill="#8f8b87" />
      <path d="M22 13L30 11L30 18Z" fill="#43c9b8" />
      <path d="M43 12L49 9L50 17Z" fill="#3c5f9c" />
      <path d="M49 15L54 16L48 21Z" fill="#c95c35" />
      <path d="M1 14C4 24 64 24 67 14L59 78C58 88 10 88 9 78Z" fill="url(#bin)" opacity="0.96" />
      <path d="M8 28C24 36 30 24 42 23C38 32 26 40 14 38Z" fill="#f6f6f6" opacity="0.600" />
      <path d="M44 32C50 30 56 26 60 24L58 36C52 42 48 42 44 32Z" fill="#f4f4f4" opacity="0.500" />
      <path d="M14 60C26 52 44 56 54 66L52 76C40 84 22 82 14 74Z" fill="#c8c8c8" opacity="0.300" />
    </svg>
  );
}

function Dock() {
  return (
    <div className="absolute top-[1780px] left-[83px] flex h-[122px] w-[2775px] items-start rounded-[38px] border-2 border-white/20 bg-[linear-gradient(90deg,#749ed9_0%,#709cd8_8%,#73a2db_13%,#8fa0bd_16%,#c39d86_18.500%,#ef9a60_22%,#f4a55c_29%,#f5a659_32%,#f98f59_37%,#f9905a_40%,#f4a55b_48%,#f8915a_56%,#f87f59_63%,#f87e58_68%,#f98e58_74%,#f7a35a_79%,#f99a59_87%,#fb8e58_94%,#fb8a58_100%)] bg-origin-border pt-[17px] pl-[16px] shadow-[0_0_6px_rgba(0,0,0,0.35)]">
      {apps.map(({ name, Icon, open }) => (
        <div key={name} className="w-[99.05px] shrink-0">
          <Icon />
          {open && <div className="mt-[17px] ml-[33px] size-[8px] rounded-full bg-[#0a2152]" />}
        </div>
      ))}
      <div className="-mt-[1px] ml-[9px] h-[90px] w-[2px] shrink-0 bg-[#c05f2c]" />
      <div className="ml-[34px] flex">
        {recents.map(({ name, Icon }) => (
          <div key={name} className="w-[99.3px] shrink-0">
            <Icon />
            <div className="mt-[17px] ml-[33px] size-[8px] rounded-full bg-[#7c1d00]" />
          </div>
        ))}
      </div>
      <div className="-mt-[1px] ml-[10px] h-[90px] w-[2px] shrink-0 bg-[#c05f2c]" />
      <div className="-mt-[7px] ml-[39px] w-[86px] shrink-0">
        <DocxFile />
      </div>
      <div className="mt-[15px] w-[109px] shrink-0">
        <MinimizedWindow />
      </div>
      <div className="-mt-[7px] shrink-0">
        <Trash />
      </div>
    </div>
  );
}

export default function App() {
  return (
    <div className="relative h-[1912px] w-[2940px] overflow-hidden bg-[#3b68a5] font-['Inter',sans-serif] antialiased">
      <Wallpaper />
      <MenuBar />
      <ZoomWindow />
      <EditorWindow />
      <BrowserWindow />
      <Dock />
    </div>
  );
}
